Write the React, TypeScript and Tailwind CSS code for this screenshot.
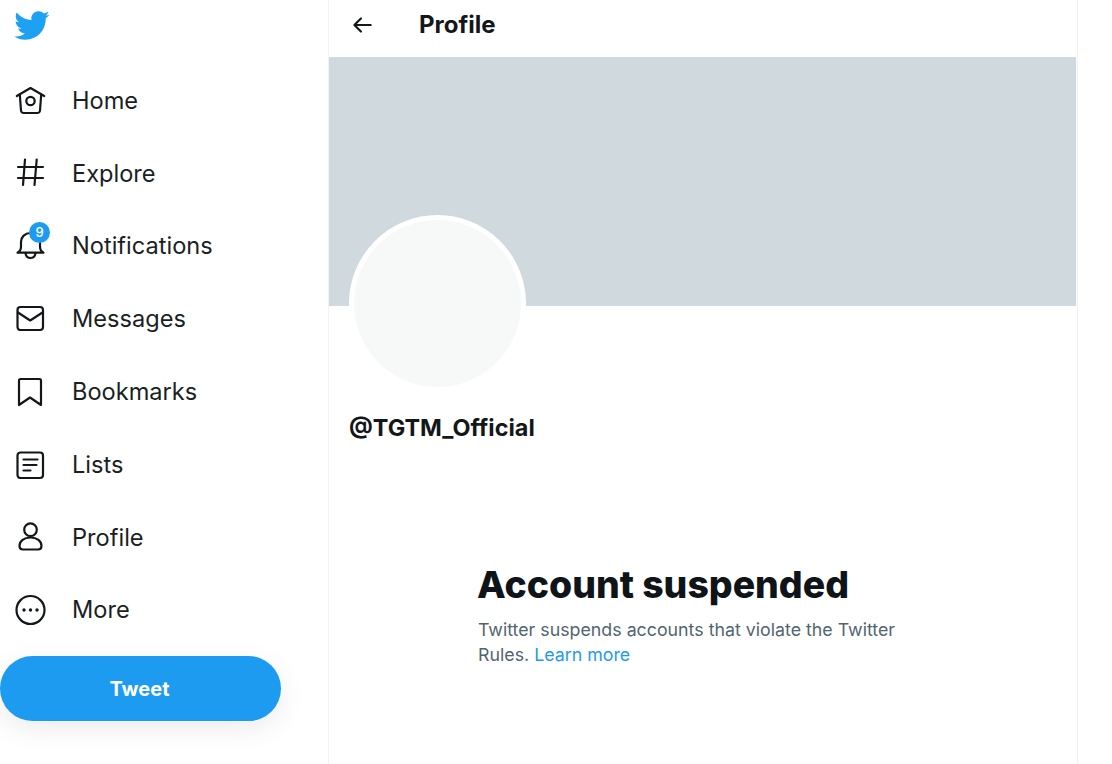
import React from "react";

const stroke = { fill: "none", stroke: "#14171a", strokeWidth: 2.2, strokeLinecap: "round", strokeLinejoin: "round" } as const;

function NavIcon({ children }: { children: React.ReactNode }) {
  return (
    <svg viewBox="0 0 32 32" className="h-8 w-8 shrink-0" {...stroke}>
      {children}
    </svg>
  );
}

const navItems = [
  {
    label: "Home",
    icon: (
      <>
        <path d="M2.800 11 16.500 3l13.700 8" />
        <path d="M5.800 9.500 7 25.500a2.800 2.800 0 0 0 2.800 2.500h13.400a2.800 2.800 0 0 0 2.800-2.500l1.200-16" />
        <circle cx="16.500" cy="16" r="4.200" />
      </>
    ),
  },
  {
    label: "Explore",
    icon: <path d="M4 10h25M4 21h25M11 2.500 9 28M22.700 2.500 20.500 28" />,
  },
  {
    label: "Notifications",
    icon: (
      <>
        <path d="M3.500 22.700h26c-2.200-1.200-3.500-3-3.500-6V12c0-5-4-9-9.500-9S7 7 7 12v4.700c0 3-1.300 4.800-3.500 6z" />
        <path d="M11.500 23c.3 3.200 2.500 5 5 5s4.700-1.800 5-5" />
      </>
    ),
  },
  {
    label: "Messages",
    icon: (
      <>
        <rect x="3.500" y="4" width="25.500" height="23" rx="3" />
        <path d="m4 9.500 12.200 8 12.300-8" />
      </>
    ),
  },
  {
    label: "Bookmarks",
    icon: <path d="M5 4.500A1.500 1.500 0 0 1 6.500 3h19A1.500 1.500 0 0 1 27 4.500V29l-11-7.500L5 29z" />,
  },
  {
    label: "Lists",
    icon: (
      <>
        <rect x="3.500" y="3.500" width="25.500" height="25.500" rx="3" />
        <path d="M9.500 10.500h14M9.500 16h13M9.500 21.500h7" />
      </>
    ),
  },
  {
    label: "Profile",
    icon: (
      <>
        <circle cx="16.500" cy="8.700" r="6.300" />
        <path d="M5.500 25c0-5 4.500-8.500 11-8.500s11 3.500 11 8.500c0 2-1.500 3.500-3.500 3.500H9c-2 0-3.500-1.500-3.500-3.500z" />
      </>
    ),
  },
  {
    label: "More",
    icon: (
      <>
        <circle cx="16.500" cy="16" r="14" />
        <circle cx="10" cy="16" r="1.700" fill="#14171a" stroke="none" />
        <circle cx="16.500" cy="16" r="1.700" fill="#14171a" stroke="none" />
        <circle cx="23" cy="16" r="1.700" fill="#14171a" stroke="none" />
      </>
    ),
  },
];

export default function App() {
  return (
    <div className="flex h-[764px] w-[1112px] overflow-hidden bg-white font-['Inter',sans-serif] text-[#14171a]">
      {/* left nav */}
      <aside className="flex w-[328px] shrink-0 flex-col">
        <div className="h-[64.2px] pl-[13px] pt-[7px]">
          <svg viewBox="0 0 24 24" className="h-[37px] w-[37px]" fill="#1da1f2">
            <path d="M23.643 4.937c-.835.37-1.732.62-2.675.733.962-.576 1.7-1.49 2.048-2.578-.9.534-1.95.922-3.076 1.14-.85-.904-2.06-1.47-3.4-1.47-2.572 0-4.658 2.086-4.658 4.66 0 .364.042.718.12 1.06-3.873-.195-7.304-2.05-9.602-4.868-.4.69-.63 1.49-.63 2.342 0 1.616.823 3.043 2.072 3.878-.764-.025-1.482-.234-2.11-.583v.06c0 2.257 1.605 4.14 3.737 4.568-.392.106-.803.162-1.227.162-.3 0-.593-.028-.877-.082.593 1.85 2.313 3.198 4.352 3.234-1.595 1.25-3.604 1.995-5.786 1.995-.376 0-.747-.022-1.112-.065 2.062 1.323 4.51 2.093 7.14 2.093 8.57 0 13.255-7.098 13.255-13.254 0-.2-.005-.402-.014-.602.91-.658 1.7-1.477 2.323-2.41z" />
          </svg>
        </div>
        <nav className="flex flex-col">
          {navItems.map((item) => (
            <div key={item.label} className="flex h-[72.8px] items-center gap-[26px] pl-[14px] text-[23.6px] leading-none text-[#1b1f23]">
              <div className="relative">
                <NavIcon>{item.icon}</NavIcon>
                {item.label === "Notifications" && (
                  <span className="absolute left-[15px] top-[-8px] flex h-[21px] w-[21px] items-center justify-center rounded-full bg-[#1d9bf0] text-[13px] font-medium text-white">
                    9
                  </span>
                )}
              </div>
              <span>{item.label}</span>
            </div>
          ))}
        </nav>
        <button className="mt-[9.400px] h-[65px] w-[281px] rounded-full bg-[#1d9bf0] pr-[2px] pt-[1px] text-[20px] font-bold text-white shadow-[0_8px_28px_rgba(0,0,0,0.08)]">
          Tweet
        </button>
      </aside>

      {/* main column */}
      <main className="h-full w-[750px] shrink-0 border-x border-[#eff3f4]">
        <header className="flex h-[57px] items-center gap-[44px] pb-[8px] pl-[20px]">
          <svg viewBox="0 0 24 24" className="h-[26px] w-[26px]" fill="none" stroke="#14171a" strokeWidth="2" strokeLinecap="round" strokeLinejoin="round">
            <path d="M20 12H5M11 6l-6 6 6 6" />
          </svg>
          <h1 className="text-[24px] font-bold">Profile</h1>
        </header>
        <div className="h-[249px] w-[747px] bg-[#cfd9de]" />
        <div className="pl-[20px]">
          <div className="-mt-[91px] h-[177px] w-[177px] rounded-full border-[5px] border-white bg-[#f7f9f9]" />
          <p className="mt-[21px] text-[23.400px] font-bold leading-[30px]">@TGTM_Official</p>
        </div>
        <div className="ml-[149px] mt-[119px] w-[440px]">
          <h2 className="-ml-[1px] text-[37.400px] font-extrabold leading-[46px] text-[#0f1419]">Account suspended</h2>
          <p className="mt-[9px] text-[17.800px] leading-[25px] text-[#536471]">
            Twitter suspends accounts that violate the Twitter Rules. <span className="text-[#1d9bf0]">Learn more</span>
          </p>
        </div>
      </main>
    </div>
  );
}
